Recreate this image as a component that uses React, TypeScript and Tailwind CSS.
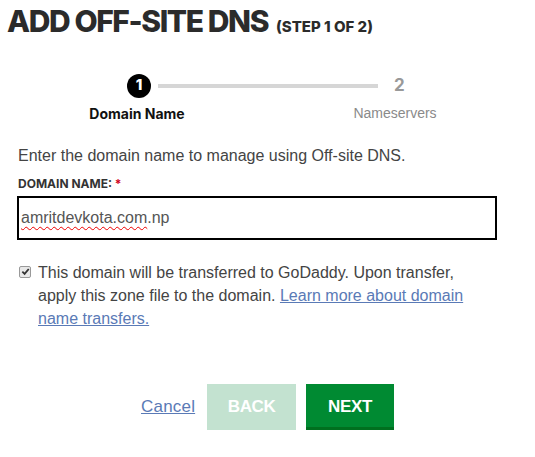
import React from "react";

export default function App() {
  const geo = { fontFamily: "Inter, 'DejaVu Sans', sans-serif" };
  const arial = { fontFamily: "'Liberation Sans', Arial, sans-serif" };
  return (
    <div className="w-[535px] h-[457px] bg-white overflow-hidden relative" style={arial}>
      <div className="flex items-baseline pl-[7px] pt-[4px]" style={geo}>
        <span className="text-[30px] font-extrabold text-[#2b2b2b] leading-[34px] tracking-[-1.4px]">ADD OFF-SITE DNS</span>
        <span className="text-[15px] font-extrabold text-[#2b2b2b] ml-[8px]">(STEP 1 OF 2)</span>
      </div>

      <div className="mt-[35px]">
        <div className="flex items-center h-[24px]">
          <div className="ml-[127px] w-[24px] h-[24px] rounded-full bg-black text-white flex items-center justify-center text-[15px] font-extrabold" style={geo}>1</div>
          <div className="ml-[7px] w-[220px] h-[4px] bg-[#d6d6d6]"></div>
          <div className="ml-[16px] text-[17px] font-bold text-[#999999]" style={geo}>2</div>
        </div>
        <div className="flex mt-[8px] h-[16px] items-center">
          <div className="ml-[77px] w-[120px] text-center text-[14px] font-bold text-[#111]" style={geo}>Domain Name</div>
          <div className="ml-[138px] w-[120px] text-center text-[14px] text-[#8a8a8a]">Nameservers</div>
        </div>
      </div>

      <div className="pl-[18px] mt-[24px] text-[16px] text-[#444] leading-[20px]">Enter the domain name to manage using Off-site DNS.</div>

      <div className="pl-[18px] mt-[11px] text-[12px] font-bold text-[#333] leading-[14px]" style={geo}>
        DOMAIN NAME: <span className="text-[#d0021b]">*</span>
      </div>

      <div className="ml-[17px] mt-[5px] w-[480px] h-[44px] border-2 border-black flex items-center pl-[2px]">
        <span className="text-[16px] text-[#555]">
          <span className="underline decoration-wavy decoration-[#e00] decoration-1 underline-offset-[3px]">amritdevkota.com</span>.np
        </span>
      </div>

      <div className="flex mt-[21px] pl-[19px]">
        <div className="w-[12px] h-[12px] mt-[5px] border border-[#999] rounded-[2px] bg-[#e8e8e8] flex items-center justify-center shrink-0">
          <svg width="9" height="9" viewBox="0 0 10 10"><path d="M1.5 5.2 L4 7.6 L8.6 2.2" stroke="#333" strokeWidth="2" fill="none" /></svg>
        </div>
        <div className="ml-[7px] w-[440px] text-[16px] leading-[23px] text-[#444]">
          This domain will be transferred to GoDaddy. Upon transfer, apply this zone file to the domain.{" "}
          <a className="text-[#5a7ab6] underline">Learn more about domain name transfers.</a>
        </div>
      </div>

      <div className="flex items-center mt-[54px] pl-[141px]">
        <a className="text-[17px] text-[#5a7ab6] underline tracking-[0.2px]">Cancel</a>
        <div className="ml-[12px] w-[89px] h-[46px] bg-[#c3e2d0] text-white flex items-center justify-center text-[17px] font-bold tracking-[-0.3px]">BACK</div>
        <div className="ml-[10px] w-[88px] h-[46px] bg-[#008a32] border-b-[3px] border-[#00701f] pt-[3px] text-white flex items-center justify-center text-[17px] font-bold tracking-[-0.3px]">NEXT</div>
      </div>
    </div>
  );
}
